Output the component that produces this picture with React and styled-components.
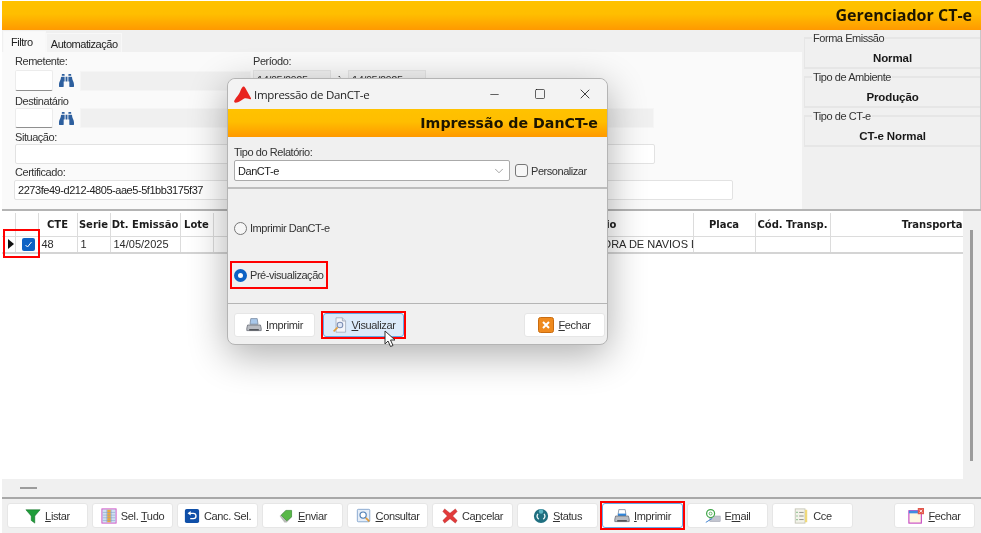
import styled, { createGlobalStyle } from 'styled-components'
import { FaBinoculars } from 'react-icons/fa'
import { Minus, Square, X, ChevronDown } from 'lucide-react'

const GlobalStyle = createGlobalStyle`
  html, body { margin: 0; padding: 0; background: #fff; }
  * { box-sizing: border-box; }
`

const PrinterIcon = ({ blue }) => (
  <svg width="20" height="20" viewBox="0 0 20 20">
    <path d="M6 2h8l1 7H5z" fill={blue ? '#fff' : '#a9c8ea'} stroke="#7a8aa0" />
    {blue && <rect x="5" y="7" width="10" height="3" fill="#2f86dd" />}
    <path d="M2 10h16l1 4v3H1v-3z" fill="#b9bcc2" stroke="#6b6f78" />
    <rect x="4" y="15" width="12" height="2" fill="#53565c" />
  </svg>
)

const FunnelIcon = () => (
  <svg viewBox="0 0 18 18">
    <path d="M1 2h16l-6 7v8l-4-3V9z" fill="#1f9d3a" stroke="#0f6b24" strokeWidth=".6" />
  </svg>
)

const GridIcon = () => (
  <svg viewBox="0 0 18 18">
    <rect x="1" y="1" width="16" height="16" fill="#cfe0f2" stroke="#d04fc4" />
    <rect x="7" y="2" width="4" height="14" fill="#f0a93a" />
    <path d="M2 5h14M2 8h14M2 11h14M2 14h14M6.500 2v14M11.500 2v14" stroke="#7f9fc4" strokeWidth=".6" />
  </svg>
)

const UndoIcon = () => (
  <svg viewBox="0 0 18 18">
    <rect x="1" y="1" width="16" height="16" rx="2" fill="#0f4fa8" />
    <path d="M6 6h4.500a3 3 0 0 1 0 6H7" fill="none" stroke="#fff" strokeWidth="1.500" />
    <path d="M7.500 3.500v5L4 6z" fill="#fff" />
  </svg>
)

const TagIcon = () => (
  <svg viewBox="0 0 20 18">
    <path d="M2 9l7-7h8v9l-6 6H8z" fill="#b9bbb8" />
    <path d="M4 8l6-6h7v8l-6 5z" fill="#59b848" stroke="#2f8a2a" strokeWidth=".7" />
  </svg>
)

const MagnifierDocIcon = () => (
  <svg viewBox="0 0 18 18">
    <rect x="1.500" y="1.500" width="14" height="14" rx="1" fill="#e6eef8" stroke="#7fa3cc" />
    <circle cx="8" cy="8" r="3.500" fill="#fff" stroke="#4f7fb5" strokeWidth="1.300" />
    <path d="M11 11l4 4" stroke="#e09a3a" strokeWidth="2" />
  </svg>
)

const CrossIcon = () => (
  <svg viewBox="0 0 18 18">
    <path d="M3 1l6 5 6-5 2 3-5 5 5 5-2 3-6-5-6 5-2-3 5-5-5-5z" fill="#e23b3b" stroke="#b01f1f" strokeWidth=".5" />
  </svg>
)

const StatusIcon = () => (
  <svg viewBox="0 0 18 18">
    <circle cx="9" cy="9" r="8" fill="#1f6f80" />
    <path d="M5.500 6.500a4.500 4.500 0 0 0 1 6M12.500 6.500a4.500 4.500 0 0 1-1 6" fill="none" stroke="#eaf6f7" strokeWidth="1.500" />
    <circle cx="9" cy="4" r="2.500" fill="#5cb6c4" />
  </svg>
)

const MailIcon = () => (
  <svg viewBox="0 0 20 18">
    <rect x="6" y="9" width="13" height="7" fill="#c2c5d0" stroke="#9a9cab" strokeWidth=".6" />
    <path d="M1 17l8-5" stroke="#3c7fd0" strokeWidth="1.200" />
    <circle cx="7" cy="6" r="5" fill="#fff" stroke="#3fa648" strokeWidth="1.500" />
    <circle cx="7" cy="6" r="1.800" fill="none" stroke="#3fa648" />
  </svg>
)

const ListDocIcon = () => (
  <svg viewBox="0 0 16 18">
    <rect x="1.500" y="1" width="11" height="16" fill="#f3f3ea" stroke="#c4c4b6" />
    <rect x="12.500" y="2" width="2.500" height="14" fill="#f0d97a" />
    <path d="M3 5h1M3 9h1M3 13h1" stroke="#3a9a4a" strokeWidth="1.400" />
    <path d="M6 5h5M6 9h5M6 13h5" stroke="#8a8a80" />
  </svg>
)

const CloseWindowIcon = () => (
  <svg viewBox="0 0 18 18">
    <rect x="1" y="3" width="14" height="14" fill="#fdf7e2" stroke="#c43fc0" strokeWidth="1.200" />
    <rect x="1" y="3" width="14" height="3" fill="#3f8de0" />
    <rect x="11" y="0" width="7" height="7" fill="#e2574c" />
    <path d="M13 2l3 3M16 2l-3 3" stroke="#fff" />
  </svg>
)

const PreviewIcon = () => (
  <svg viewBox="0 0 20 20">
    <path d="M5 1h8l4 4v14H5z" fill="#f4f6fa" stroke="#9fa8b8" />
    <path d="M13 1v4h4" fill="#d5dbe6" stroke="#9fa8b8" />
    <circle cx="10" cy="10" r="3.500" fill="#dfe8f7" stroke="#7d8fb3" strokeWidth="1.300" />
    <path d="M7 13l-5 5" stroke="#e0a040" strokeWidth="2" />
  </svg>
)

const OrangeCloseIcon = () => (
  <svg viewBox="0 0 16 16">
    <rect x=".5" y=".5" width="15" height="15" rx="2" fill="#ef8a1e" stroke="#c96c10" />
    <path d="M5 5l6 6M11 5l-6 6" stroke="#fff" strokeWidth="2" />
  </svg>
)

const LogoIcon = () => (
  <svg width="17" height="17" viewBox="0 0 16 16">
    <path d="M8.500.5c1.500-.5 2.300 1.500 3.200 3.200L16 11.500c.2 1.200-1.300 1-2.300.6-1.500-.6-3-.9-4.500-.2-2.500 1.200-4.500 3.600-7.700 3.800-1.300 0-1.700-1-1-2.200C2 10.500 4 9 5.200 6.500 6.200 4.500 7 1.500 8.500.5z" fill="#e8231f" />
  </svg>
)

const toolbarButtons = [
  { icon: <FunnelIcon />, label: <><u>L</u>istar</> },
  { icon: <GridIcon />, label: <>Sel. <u>T</u>udo</> },
  { icon: <UndoIcon />, label: <>Canc. Sel.</> },
  { icon: <TagIcon />, label: <><u>E</u>nviar</> },
  { icon: <MagnifierDocIcon />, label: <><u>C</u>onsultar</> },
  { icon: <CrossIcon />, label: <>Ca<u>n</u>celar</> },
  { icon: <StatusIcon />, label: <><u>S</u>tatus</> },
  { icon: <PrinterIcon blue />, label: <><u>I</u>mprimir</>, marked: true },
  { icon: <MailIcon />, label: <>E<u>m</u>ail</> },
  { icon: <ListDocIcon />, label: <>Cce</> },
]

const columns = [
  { title: '', width: 13 },
  { title: '', width: 23 },
  { title: 'CTE', width: 39, value: '48' },
  { title: 'Serie', width: 33, value: '1' },
  { title: 'Dt. Emissão', width: 70, value: '14/05/2025' },
  { title: 'Lote', width: 33 },
  { title: 'Cód. Rem.', width: 257 },
  { title: 'Destinatário', width: 223, value: 'TRANSPORTADORA DE NAVIOS LTDA', pad: 50 },
  { title: 'Placa', width: 62 },
  { title: 'Cód. Transp.', width: 75 },
  { title: 'Transportadora', width: 230 },
]

export default function App() {
  return (
    <Page>
      <GlobalStyle />
      <TopBar>Gerenciador CT-e</TopBar>

      <FilterArea>
        <FilterPanel>
          <Tabs>
            <Tab $active>Filtro</Tab>
            <Tab>Automatização</Tab>
          </Tabs>
          <TabBody>
            <FieldLine>
              <Field $width={238}>
                <Label $after={2}>Remetente:</Label>
                <InputRow>
                  <CodeInput $tall />
                  <FinderIcon><FaBinoculars size={15} /></FinderIcon>
                  <ReadOnlyBox $width={171} />
                </InputRow>
              </Field>
              <Field>
                <Label $after={2}>Período:</Label>
                <InputRow>
                  <DateBox>14/05/2025</DateBox>
                  <DateSep>à</DateSep>
                  <DateBox>14/05/2025</DateBox>
                </InputRow>
              </Field>
            </FieldLine>
            <Field $top={3}>
              <Label>Destinatário</Label>
              <InputRow>
                <CodeInput />
                <FinderIcon><FaBinoculars size={15} /></FinderIcon>
                <ReadOnlyBox $width={574} />
              </InputRow>
            </Field>
            <Field $top={2}>
              <Label>Situação:</Label>
              <ValueBox $width={640} />
            </Field>
            <Field $top={1}>
              <Label $after={1}>Certificado:</Label>
              <ValueBox $width={719} $shift={-1}>2273fe49-d212-4805-aae5-5f1bb3175f37</ValueBox>
            </Field>
          </TabBody>
        </FilterPanel>

        <InfoPanel>
          <InfoGroup>
            <legend>Forma Emissão</legend>
            Normal
          </InfoGroup>
          <InfoGroup>
            <legend>Tipo de Ambiente</legend>
            Produção
          </InfoGroup>
          <InfoGroup>
            <legend>Tipo de CT-e</legend>
            CT-e Normal
          </InfoGroup>
        </InfoPanel>
      </FilterArea>

      <GridArea>
        <GridBody>
          <TableClip>
            <Table>
              <colgroup>
                {columns.map((c, i) => <col key={i} style={{ width: c.width }} />)}
              </colgroup>
              <thead>
                <tr>
                  {columns.map((c, i) => <Th key={i}>{c.title}</Th>)}
                </tr>
              </thead>
              <tbody>
                <tr>
                  <Td><RowArrow /></Td>
                  <Td><RowCheck>
                    <svg width="9" height="9" viewBox="0 0 9 9">
                      <path d="M1.500 5l2 2 4-5" fill="none" stroke="#fff" strokeWidth="1" />
                    </svg>
                  </RowCheck></Td>
                  {columns.slice(2).map((c, i) => <Td key={i} $pad={c.pad}>{c.value}</Td>)}
                </tr>
              </tbody>
            </Table>
            <RowMark />
          </TableClip>
          <VScroll><VThumb /></VScroll>
        </GridBody>
        <HScroll><HThumb /></HScroll>
      </GridArea>

      <Toolbar>
        {toolbarButtons.map((b, i) => {
          const button = (
            <ActionButton key={i} $marked={b.marked}>
              {b.icon}<span>{b.label}</span>
            </ActionButton>
          )
          return b.marked ? <MarkFrame key={i}>{button}</MarkFrame> : button
        })}
        <CloseSlot>
          <ActionButton><CloseWindowIcon /><span><u>F</u>echar</span></ActionButton>
        </CloseSlot>
      </Toolbar>

      <Dialog>
        <TitleBar>
          <LogoIcon />
          <TitleText>Impressão de DanCT-e</TitleText>
          <WindowControls>
            <ControlSlot><Minus size={13} strokeWidth={1.200} /></ControlSlot>
            <ControlSlot><Square size={12} strokeWidth={1.300} /></ControlSlot>
            <ControlSlot><X size={16} strokeWidth={1.200} /></ControlSlot>
          </WindowControls>
        </TitleBar>
        <DialogBanner>Impressão de DanCT-e</DialogBanner>
        <ReportSection>
          <Label>Tipo do Relatório:</Label>
          <ReportRow>
            <ReportSelect>
              DanCT-e
              <ChevronDown size={14} strokeWidth={1} color="#666" />
            </ReportSelect>
            <CheckLabel><EmptyCheck />Personalizar</CheckLabel>
          </ReportRow>
        </ReportSection>
        <RadioSection>
          <RadioLine><Radio />Imprimir DanCT-e</RadioLine>
          <RadioLine $marked><Radio $checked />Pré-visualização</RadioLine>
        </RadioSection>
        <DialogFooter>
          <DialogButton><PrinterIcon /><span><u>I</u>mprimir</span></DialogButton>
          <MarkFrame>
            <DialogButton $focused><PreviewIcon /><span><u>V</u>isualizar</span></DialogButton>
          </MarkFrame>
          <FooterRight>
            <DialogButton><OrangeCloseIcon /><span><u>F</u>echar</span></DialogButton>
          </FooterRight>
        </DialogFooter>
        <Cursor width="14" height="18" viewBox="0 0 14 18">
          <path d="M1 1v13l3-3 2.500 5.500 2.500-1L6.500 10H11z" fill="#fff" stroke="#333" strokeWidth="1" />
        </Cursor>
      </Dialog>
    </Page>
  )
}

const Page = styled.div`
  position: relative;
  width: 981px;
  height: 533px;
  overflow: hidden;
  background: #fff;
  padding: 1px 0 0 2px;
  display: flex;
  flex-direction: column;
  font-family: 'Liberation Sans', Arial, sans-serif;
  font-size: 11px;
  letter-spacing: -0.45px;
  color: #222;
  filter: blur(0.45px);
`

const TopBar = styled.div`
  height: 29px;
  flex: none;
  background: linear-gradient(#ffc200, #ffbe00 45%, #ff9900);
  text-align: right;
  padding-right: 9px;
  line-height: 29px;
  font-family: 'Open Sans', sans-serif;
  font-weight: 700;
  font-size: 16px;
  letter-spacing: 0;
  color: #1d1500;
`

const FilterArea = styled.div`
  display: flex;
  height: 181px;
  flex: none;
  gap: 2px;
  border-bottom: 2px solid #b4b4b4;
  background: #f0f0f0;
`

const FilterPanel = styled.div`
  width: 800px;
  display: flex;
  flex-direction: column;
`

const Tabs = styled.div`
  display: flex;
  height: 22px;
  flex: none;
  align-items: flex-end;
  padding-left: 1px;
`

const Tab = styled.div`
  height: ${p => (p.$active ? '21px' : '19px')};
  padding: ${p => (p.$active ? '4px 12px 0 7px' : '4px 3px 0 4px')};
  background: ${p => (p.$active ? '#fafafa' : '#f2f2f2')};
  border: 1px solid #f8f8f8;
  border-bottom: none;
`

const TabBody = styled.div`
  flex: 1;
  background: #fafafa;
  padding: 2px 0 0 13px;
  display: flex;
  flex-direction: column;
`

const FieldLine = styled.div`
  display: flex;
`

const Field = styled.div`
  width: ${p => (p.$width ? `${p.$width}px` : 'auto')};
  margin-top: ${p => p.$top || 0}px;
  display: flex;
  flex-direction: column;
`

const Label = styled.label`
  display: block;
  height: 14px;
  margin-bottom: ${p => p.$after || 0}px;
  line-height: 14px;
  color: #333;
`

const InputRow = styled.div`
  display: flex;
  align-items: center;
`

const CodeInput = styled.div`
  width: 38px;
  height: ${p => (p.$tall ? '21px' : '20px')};
  background: #fff;
  border: 1px solid #ececec;
  border-bottom: 1px solid #8f8f8f;
  border-radius: 2px;
`

const FinderIcon = styled.span`
  width: 27px;
  display: flex;
  justify-content: center;
  color: #2d5f9e;
`

const ReadOnlyBox = styled.div`
  width: ${p => p.$width}px;
  height: 20px;
  background: #f0f0f0;
  border: 1px solid #f5f5f5;
`

const DateBox = styled.div`
  width: 78px;
  height: 20px;
  padding: 3px 3px 0;
  background: #f2f2f2;
  border: 1px solid #e6e6e6;
  color: #333;
`

const DateSep = styled.span`
  width: 17px;
  text-align: center;
`

const ValueBox = styled.div`
  width: ${p => p.$width}px;
  height: 20px;
  line-height: 18px;
  padding-left: 3px;
  background: #fff;
  border: 1px solid #e2e2e2;
  border-radius: 2px;
  margin-left: ${p => p.$shift || 0}px;
`

const InfoPanel = styled.div`
  flex: 1;
  padding-top: 2px;
  display: flex;
  flex-direction: column;
  gap: 2px;
  border-right: 1px solid #c8c8c8;
`

const InfoGroup = styled.fieldset`
  margin: 0;
  padding: 8px 0 0;
  height: 37px;
  border: 2px solid #e6e6e6;
  border-right: none;
  border-left: 1px solid #e6e6e6;
  font-weight: 700;
  font-size: 11.5px;
  letter-spacing: -0.1px;
  text-align: center;
  color: #181818;

  legend {
    margin-left: 7px;
    padding: 0 1px;
    font-weight: 400;
    font-size: 11px;
    letter-spacing: -0.45px;
    color: #333;
    text-align: left;
  }
`

const GridArea = styled.div`
  flex: 1;
  display: flex;
  flex-direction: column;
  min-height: 0;
`

const GridBody = styled.div`
  flex: 1;
  display: flex;
  min-height: 0;
`

const TableClip = styled.div`
  position: relative;
  width: 961px;
  overflow: hidden;
  padding-top: 2px;
`

const Table = styled.table`
  table-layout: fixed;
  border-collapse: collapse;
  width: 858px;
`

const Th = styled.th`
  height: 23px;
  padding: 0;
  font-family: 'DejaVu Sans', sans-serif;
  font-size: 10px;
  font-weight: 700;
  letter-spacing: 0;
  color: #1c1c1c;
  text-align: center;
  white-space: nowrap;
  overflow: hidden;
  border-right: 1px solid #dcdcdc;
  border-bottom: 1px solid #dcdcdc;
`

const Td = styled.td`
  height: 17px;
  padding: 0 0 0 ${p => p.$pad || 3}px;
  white-space: nowrap;
  overflow: hidden;
  font-size: 11px;
  letter-spacing: 0;
  color: #2a2a2a;
  border-right: 1px solid #dcdcdc;
  border-bottom: 2px solid #d4d4d4;
`

const RowArrow = styled.div`
  width: 0;
  height: 0;
  margin-left: 3px;
  border-top: 5.500px solid transparent;
  border-bottom: 5.500px solid transparent;
  border-left: 6px solid #111;
`

const RowCheck = styled.div`
  width: 13px;
  height: 13px;
  margin-left: 3px;
  border-radius: 2px;
  background: #0d62c4;
  display: flex;
  align-items: center;
  justify-content: center;
`

const RowMark = styled.div`
  position: absolute;
  left: 1px;
  top: 18px;
  width: 37px;
  height: 29px;
  border: 2px solid #f00;
`

const VScroll = styled.div`
  flex: 1;
  background: #f0f0f0;
  padding: 19px 0 0 7px;
`

const VThumb = styled.div`
  width: 2.500px;
  height: 231px;
  background: #9c9c9c;
`

const HScroll = styled.div`
  height: 18px;
  flex: none;
  background: #f0f0f0;
  padding: 8px 0 0 18px;
`

const HThumb = styled.div`
  width: 17px;
  height: 2px;
  background: #9c9c9c;
`

const Toolbar = styled.div`
  height: 36px;
  flex: none;
  display: flex;
  align-items: flex-start;
  gap: 4px;
  padding: 4px 6px 0 5px;
  background: #f0f0f0;
  border-top: 2px solid #a8a8a8;
`

const CloseSlot = styled.div`
  margin-left: auto;
`

const MarkFrame = styled.div`
  margin: -2px;
  border: 2px solid #f00;
  flex: none;
  background: #fff;
`

const ActionButton = styled.button`
  width: 81px;
  height: 25px;
  padding: 0;
  display: flex;
  align-items: center;
  justify-content: center;
  gap: 4px;
  background: #fff;
  border: 1px solid ${p => (p.$marked ? '#64a8e6' : '#e6e6e6')};
  border-radius: 3px;
  font-family: inherit;
  font-size: 11px;
  letter-spacing: -0.35px;
  color: #333;

  svg {
    width: 16px;
    height: 16px;
    flex: none;
  }
`

const Dialog = styled.div`
  position: absolute;
  left: 227px;
  top: 78px;
  width: 381px;
  height: 267px;
  display: flex;
  flex-direction: column;
  background: #f0f0f0;
  border: 1px solid #b4b4b4;
  border-radius: 8px;
  box-shadow: 0 10px 38px rgba(0, 0, 0, 0.32);
`

const TitleBar = styled.div`
  height: 30px;
  flex: none;
  display: flex;
  align-items: center;
  padding-left: 6px;
  gap: 3px;
  background: #f3f3f3;
  border-radius: 8px 8px 0 0;
`

const TitleText = styled.span`
  font-family: 'Open Sans', sans-serif;
  font-size: 11.5px;
  letter-spacing: -0.3px;
  color: #222;
`

const WindowControls = styled.div`
  margin-left: auto;
  display: flex;
  color: #111;
`

const ControlSlot = styled.span`
  width: 45px;
  display: flex;
  justify-content: center;
  align-items: center;
`

const DialogBanner = styled.div`
  height: 28px;
  flex: none;
  background: linear-gradient(#ffc200, #ffbe00 45%, #ff9900);
  text-align: right;
  padding-right: 9px;
  line-height: 28px;
  font-family: 'DejaVu Sans', sans-serif;
  font-weight: 700;
  font-size: 14.2px;
  letter-spacing: 0;
  color: #1d1500;
`

const ReportSection = styled.div`
  height: 52px;
  flex: none;
  padding: 8px 0 0 6px;
  border-bottom: 2px solid #bdbdbd;

  label {
    margin-bottom: 1px;
  }
`

const ReportRow = styled.div`
  display: flex;
  align-items: center;
  gap: 5px;
`

const ReportSelect = styled.div`
  width: 276px;
  height: 21px;
  padding: 0 3px;
  display: flex;
  align-items: center;
  justify-content: space-between;
  background: #fff;
  border: 1px solid #aaa;
  border-radius: 2px;
`

const CheckLabel = styled.div`
  display: flex;
  align-items: center;
  gap: 3px;
  color: #333;
`

const EmptyCheck = styled.span`
  width: 13px;
  height: 13px;
  background: #f6f6f6;
  border: 1px solid #777;
  border-radius: 3px;
`

const RadioSection = styled.div`
  flex: 1;
  padding: 26px 0 0 3px;
  display: flex;
  flex-direction: column;
  align-items: flex-start;
  gap: 21px;
  border-bottom: 1px solid #b5b5b5;
`

const RadioLine = styled.div`
  display: flex;
  align-items: center;
  gap: 3px;
  height: 26px;
  padding: 0 3px;
  outline: ${p => (p.$marked ? '2px solid #f00' : 'none')};
  outline-offset: -1px;
  color: #333;
`

const Radio = styled.span`
  width: 13px;
  height: 13px;
  border-radius: 50%;
  background: ${p => (p.$checked ? '#fff' : '#f6f6f6')};
  border: ${p => (p.$checked ? '4px solid #0d62c4' : '1px solid #777')};
`

const DialogFooter = styled.div`
  height: 40px;
  flex: none;
  display: flex;
  align-items: flex-start;
  gap: 8px;
  padding: 9px 2px 0 6px;
`

const FooterRight = styled.div`
  margin-left: auto;
`

const DialogButton = styled.button`
  width: 81px;
  height: 24px;
  padding: 0;
  display: flex;
  align-items: center;
  justify-content: center;
  gap: 4px;
  background: ${p => (p.$focused ? '#dcebfa' : '#fff')};
  border: 1px solid ${p => (p.$focused ? '#64a8e6' : '#e6e6e6')};
  border-radius: 3px;
  font-family: inherit;
  font-size: 11px;
  letter-spacing: -0.35px;
  color: #333;

  svg {
    width: 16px;
    height: 16px;
    flex: none;
  }
`

const Cursor = styled.svg`
  position: absolute;
  left: 156px;
  top: 251px;
`
